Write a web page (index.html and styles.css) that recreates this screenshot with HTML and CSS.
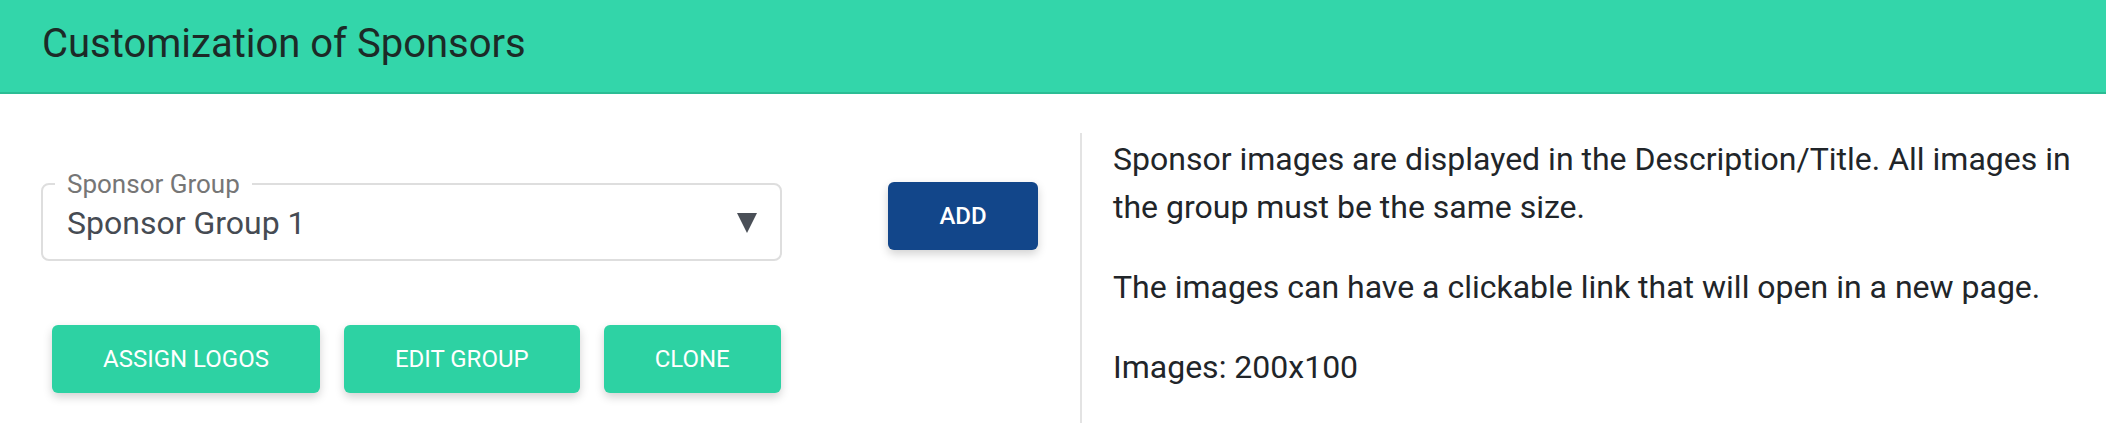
FILE: index.html
```html
<!DOCTYPE html>
<html lang="en">
<head>
<meta charset="utf-8">
<title>Customization of Sponsors</title>
<link rel="stylesheet" href="styles.css">
</head>
<body>
<header class="page-header">
  <h1 class="page-title">Customization of Sponsors</h1>
</header>
<main class="content">
  <section class="controls">
    <div class="group-row">
      <fieldset class="select-field">
        <legend class="select-label">Sponsor Group</legend>
        <div class="select-value">
          <span>Sponsor Group 1</span>
          <svg class="select-arrow" viewBox="0 0 20 20" width="20" height="20" aria-hidden="true"><polygon points="0,0 20,0 10,20" fill="#4a4f57"/></svg>
        </div>
      </fieldset>
      <button class="btn btn-primary btn-add" type="button">ADD</button>
    </div>
    <div class="action-row">
      <button class="btn btn-green" type="button">ASSIGN LOGOS</button>
      <button class="btn btn-green" type="button">EDIT GROUP</button>
      <button class="btn btn-green" type="button">CLONE</button>
    </div>
  </section>
  <aside class="info">
    <p>Sponsor images are displayed in the Description/Title. All images in the group must be the same size.</p>
    <p>The images can have a clickable link that will open in a new page.</p>
    <p>Images: 200x100</p>
  </aside>
</main>
</body>
</html>
```
FILE: styles.css
```css
* { box-sizing: border-box; }
html, body { margin: 0; padding: 0; background: #ffffff; }
body {
  font-family: Roboto, "Liberation Sans", Arial, sans-serif;
  color: #212529;
  width: 2106px;
  height: 446px;
  overflow: hidden;
}
.page-header {
  height: 94px;
  background: #33d6aa;
  border-bottom: 2px solid #2bbd94;
  padding: 20px 0 0 42px;
}
.page-title {
  margin: 0;
  font-size: 40px;
  font-weight: 400;
  line-height: normal;
  color: #1c2a27;
}
.content {
  display: flex;
  align-items: flex-start;
  height: 352px;
}
.controls {
  width: 1080px;
  padding: 77px 0 0 41px;
}
.group-row {
  display: flex;
  align-items: flex-start;
}
.select-field {
  width: 741px;
  height: 90px;
  margin: 0;
  padding: 0 12px;
  border: 2px solid #dedede;
  border-radius: 8px;
}
.select-label {
  padding: 0 12px;
  font-size: 26px;
  line-height: 26px;
  color: #767676;
}
.select-value {
  display: flex;
  align-items: center;
  justify-content: space-between;
  padding: 6px 11px 0 12px;
  font-size: 32px;
  line-height: 40px;
  color: #464b53;
}
.select-arrow { display: block; }
.btn {
  height: 68px;
  padding: 0 51px;
  border: none;
  border-radius: 6px;
  font-family: Roboto, "Liberation Sans", Arial, sans-serif;
  font-size: 24px;
  font-weight: 400;
  color: #ffffff;
  box-shadow: 0 4px 10px rgba(0, 0, 0, 0.18);
}
.btn-primary { background: #12468a; }
.btn-add {
  width: 150px;
  padding: 0;
  margin: 11px 0 0 106px;
  font-weight: 500;
}
.btn-green { background: #2dd2a3; }
.action-row {
  display: flex;
  gap: 24px;
  margin: 64px 0 0 11px;
}
.info {
  margin-top: 39px;
  border-left: 2px solid #e3e3e3;
  padding: 2px 0 0 31px;
  width: 1008px;
  font-size: 32px;
  line-height: 48px;
}
.info p { margin: 0 0 32px; width: 975px; }
```
